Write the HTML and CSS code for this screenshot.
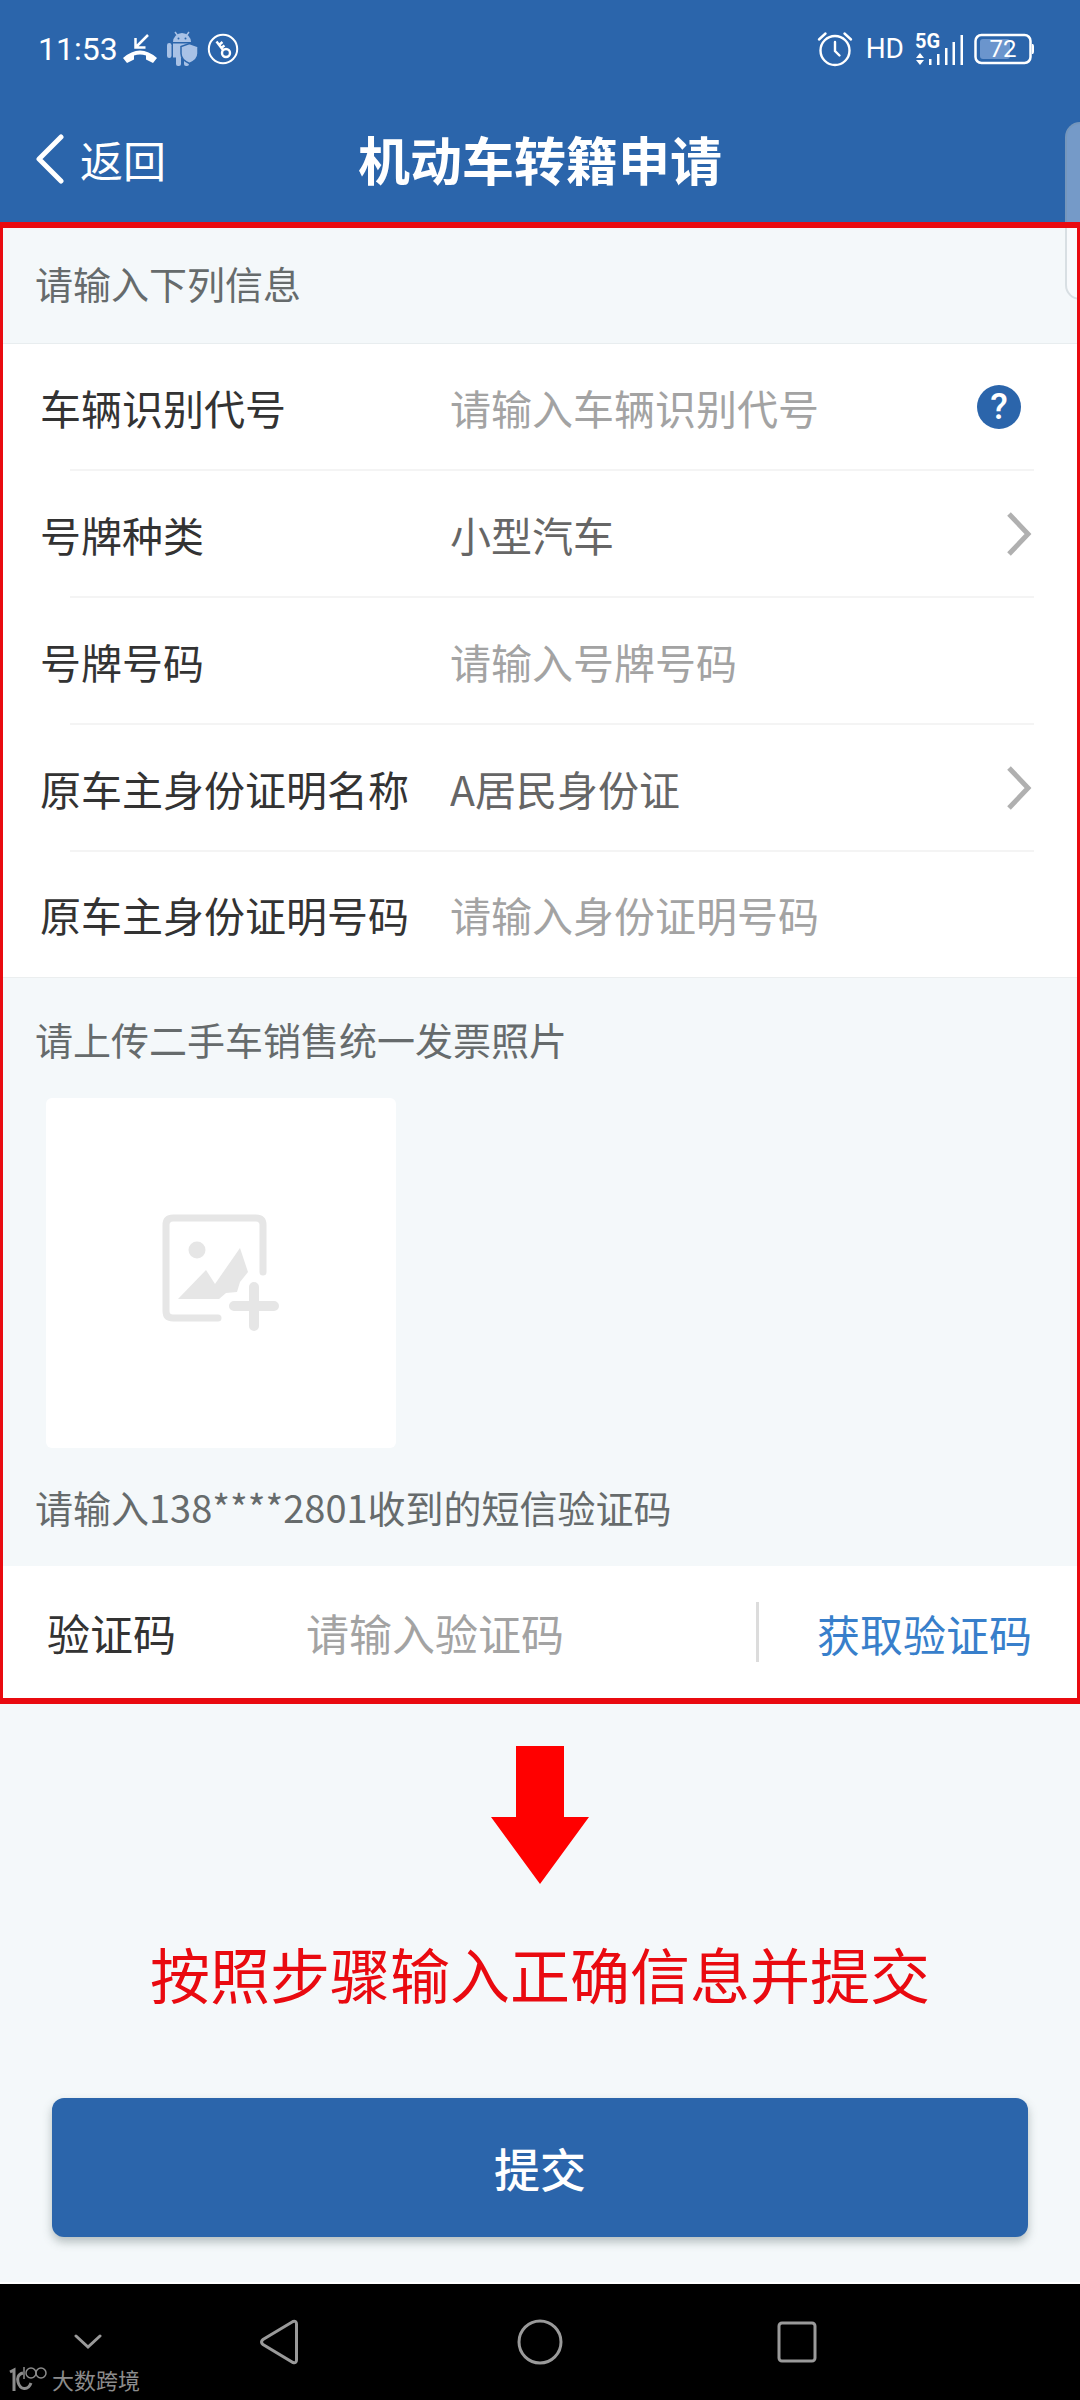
FILE: index.html
```html
<!DOCTYPE html>
<html lang="zh-CN">
<head>
<meta charset="utf-8">
<meta name="viewport" content="width=device-width, initial-scale=1">
<title>机动车转籍申请</title>
<link rel="stylesheet" href="styles.css">
</head>
<body>
<header class="top">
  <div class="status">
    <div class="status-left">
      <span class="clock">11:53</span>
      <svg class="ic-call" width="34" height="30" viewBox="0 0 34 30">
        <path d="M25 1 13 13M12.500 4v9.500h10" fill="none" stroke="#fff" stroke-width="2.500"/>
        <path d="M0 24Q17 9 34 24l-4 5-7-3.500v-4q-6-2-12 0v4L4 29z" fill="#fff"/>
      </svg>
      <svg class="ic-robot" width="32" height="36" viewBox="0 0 32 36" fill="#a9c2e6">
        <path d="M7 11a9 9 0 0 1 18 0z"/>
        <path d="M9 1l3 4M23 1l-3 4" stroke="#a9c2e6" stroke-width="1.500"/>
        <circle cx="12.500" cy="7.500" r="1" fill="#2b65ab"/><circle cx="19.500" cy="7.500" r="1" fill="#2b65ab"/>
        <rect x="1" y="12" width="4.500" height="15" rx="2.200"/>
        <path d="M7 12.500h18v14H7z"/>
        <rect x="10" y="24" width="5" height="11" rx="2"/>
        <rect x="18" y="26" width="5" height="9" rx="2"/>
        <path d="M23.500 12.500l8.500 3v7c0 5-4 8-8.500 10-4.500-2-8.500-5-8.500-10v-7z" stroke="#2b65ab" stroke-width="1.500"/>
      </svg>
      <svg width="32" height="32" viewBox="0 0 32 32" fill="none" stroke="#fff" stroke-width="2">
        <circle cx="16" cy="16" r="14.200"/>
        <circle cx="19" cy="20" r="4" stroke-width="2.400"/>
        <path d="M16 17 9.500 8.500M12 12l3.500-3M14 15l3.500-2.500" stroke-width="2.400"/>
      </svg>
    </div>
    <div class="status-right">
      <svg width="36" height="36" viewBox="0 0 36 36" fill="none" stroke="#fff" stroke-width="2.400" stroke-linecap="round">
        <circle cx="18" cy="19.500" r="14.500"/>
        <path d="M2 8.500 8.500 2.500M34 8.500 27.500 2.500M18 11v9l4.500 4.500"/>
      </svg>
      <span class="hd">HD</span>
      <svg width="50" height="44" viewBox="0 -5 50 44" fill="#fff">
        <text class="net" x="0" y="16">5G</text>
        <path d="M1 26l4-5 4 5zM1 28h8l-4 5z"/>
        <path d="M14 27h2.500v6H14zM22 22h2.500v11H22zM30 16h2.500v17H30zM37.500 10H40v23h-2.500zM45.500 3H48v30h-2.500z"/>
      </svg>
      <svg width="60" height="32" viewBox="0 0 60 32">
        <rect x="1.500" y="2" width="55" height="28" rx="6" fill="none" stroke="#fff" stroke-width="2.500"/>
        <rect x="6" y="6" width="30" height="20" rx="3" fill="#6b95cd"/>
        <path d="M58 11c2 0 2 1 2 5s0 5-2 5z" fill="#fff"/>
        <text class="charge" x="29" y="24" text-anchor="middle">72</text>
      </svg>
    </div>
  </div>
  <div class="bar">
    <a class="back" href="#">
      <svg width="28" height="50" viewBox="0 0 28 50" fill="none" stroke="#fff" stroke-width="5" stroke-linecap="round" stroke-linejoin="round"><path d="M25 3 3 25l22 22"/></svg>
      返回
    </a>
    <h1 class="title">机动车转籍申请</h1>
  </div>
  <div class="side-handle"></div>
</header>

<main class="page">
  <form class="form">
    <p class="hint hint-first">请输入下列信息</p>
    <div class="fields">
      <div class="row">
        <label for="vin">车辆识别代号</label>
        <input id="vin" type="text" placeholder="请输入车辆识别代号">
        <button class="help" type="button" aria-label="帮助">?</button>
      </div>
      <div class="row">
        <label for="plate-type">号牌种类</label>
        <select id="plate-type"><option>小型汽车</option></select>
        <svg class="go" width="26" height="46" viewBox="0 0 26 46" fill="none" stroke="#b0b0b0" stroke-width="5"><path d="M3 3l19 20L3 43"/></svg>
      </div>
      <div class="row">
        <label for="plate-no">号牌号码</label>
        <input id="plate-no" type="text" placeholder="请输入号牌号码">
      </div>
      <div class="row">
        <label for="id-type">原车主身份证明名称</label>
        <select id="id-type"><option>A居民身份证</option></select>
        <svg class="go" width="26" height="46" viewBox="0 0 26 46" fill="none" stroke="#b0b0b0" stroke-width="5"><path d="M3 3l19 20L3 43"/></svg>
      </div>
      <div class="row">
        <label for="id-no">原车主身份证明号码</label>
        <input id="id-no" type="text" placeholder="请输入身份证明号码">
      </div>
    </div>
    <p class="hint">请上传二手车销售统一发票照片</p>
    <button class="upload" type="button" aria-label="上传照片">
      <svg width="118" height="118" viewBox="0 0 118 118" fill="#e6e6e6">
        <path d="M101 58V11q0-7-7-7H11q-7 0-7 7v86q0 7 7 7h45" fill="none" stroke="#e6e6e6" stroke-width="7" stroke-linecap="round"/>
        <circle cx="35" cy="36" r="8.500"/>
        <path d="M16 85 44 56l9 14L78 34l8 24-8 10-3 10-11 1-7 6z"/>
        <path d="M92 73v39M72 92h40" stroke="#e6e6e6" stroke-width="10" stroke-linecap="round"/>
      </svg>
    </button>
    <p class="hint hint-code">请输入138****2801收到的短信验证码</p>
    <div class="code-row">
      <label for="code">验证码</label>
      <input id="code" type="text" placeholder="请输入验证码">
      <button class="get-code" type="button">获取验证码</button>
    </div>
  </form>

  <section class="guide">
    <svg width="98" height="138" viewBox="0 0 98 138" fill="#f00"><path d="M25 0h48v71h25L49 138 0 71h25z"/></svg>
    <p>按照步骤输入正确信息并提交</p>
  </section>
  <button class="submit" type="button">提交</button>
</main>

<nav class="keys">
  <button type="button" aria-label="收起"><svg width="28" height="16" viewBox="0 0 28 16"><path d="M2 2l12 11L26 2"/></svg></button>
  <button type="button" aria-label="后退"><svg width="40" height="46" viewBox="0 0 40 46"><path d="M34 2.500 4 20.500q-3 2.500 0 5L34 43.500q3.500 1 3.500-2.500V5q0-3.500-3.500-2.500z"/></svg></button>
  <button type="button" aria-label="主页"><svg width="46" height="46" viewBox="0 0 46 46"><circle cx="23" cy="23" r="21"/></svg></button>
  <button type="button" aria-label="最近任务"><svg width="40" height="42" viewBox="0 0 40 42"><rect x="2" y="2" width="36" height="38" rx="3"/></svg></button>
  <div class="mark">
    <svg width="38" height="26" viewBox="0 0 38 26" fill="none" stroke="#8c8c8c" stroke-width="1.500">
      <path d="M1 6l4-2v21" stroke-width="3"/>
      <path d="M14 7c-5 1-6 5-5 9 2 8 10 9 13 1" stroke-width="3"/>
      <path d="M15 1v12"/><circle cx="22" cy="7" r="5"/><circle cx="32" cy="7" r="5"/>
    </svg>
    <span>大数跨境</span>
  </div>
</nav>
</body>
</html>
```
FILE: styles.css
```css
* {
  box-sizing: border-box;
}

body {
  margin: 0;
  min-height: 100vh;
  display: flex;
  flex-direction: column;
  background: #f4f8fa;
  color: #333;
  font-family: "Noto Sans CJK SC", sans-serif;
  font-size: 41px;
}

h1,
p {
  margin: 0;
  font-weight: 400;
}

button,
input,
select {
  margin: 0;
  padding: 0;
  border: 0;
  background: none;
  color: inherit;
  font: inherit;
}

svg {
  display: block;
  flex: none;
}

/* Status bar and title bar */
.top {
  position: relative;
  background: #2b65ab;
  color: #fff;
}

.status {
  display: flex;
  justify-content: space-between;
  align-items: center;
  height: 98px;
  padding: 0 46px 0 38px;
}

.status-left,
.status-right {
  display: flex;
  align-items: center;
  gap: 9px;
}

.clock {
  font: 32px/40px Roboto, sans-serif;
}

.ic-call {
  margin-left: -4px;
}

.hd {
  margin: 0 2px 0 4px;
  font: 28px/40px Roboto, sans-serif;
}

.net {
  font: 700 20px Roboto, sans-serif;
}

.charge {
  fill: #fff;
  font: 24px Roboto, sans-serif;
}

.bar {
  display: grid;
  grid-template-columns: 1fr auto 1fr;
  align-items: center;
  height: 124px;
  padding: 0 36px 2px;
}

.back {
  display: flex;
  align-items: center;
  gap: 16px;
  color: #fff;
  font-size: 43px;
  line-height: 60px;
  text-decoration: none;
}

.title {
  font-size: 52px;
  font-weight: 700;
  line-height: 76px;
}

.side-handle {
  position: absolute;
  z-index: 1;
  top: 122px;
  right: 0;
  width: 15px;
  height: 178px;
  border: 2px solid rgba(120, 140, 150, 0.25);
  border-right: 0;
  border-radius: 26px 0 0 26px;
  background: rgba(255, 255, 255, 0.35);
}

/* Form */
.page {
  flex: 1;
  display: flex;
  flex-direction: column;
}

.form {
  position: relative;
  z-index: 2;
  border: solid #e90a10;
  border-width: 6px 3px;
}

.hint {
  padding: 33px 32px 31px;
  color: #666b6c;
  font-size: 38px;
  line-height: 56px;
}

.hint-first {
  padding: 27px 32px 32px;
  border-bottom: 1px solid #e8edef;
}

.hint-code {
  padding: 31px 32px;
}

.fields {
  background: #fff;
  border-bottom: 1px solid #ebeeef;
}

.row {
  position: relative;
  display: grid;
  grid-template-columns: 410px 1fr auto;
  align-items: center;
  height: 127px;
  padding: 0 45px 2px 37px;
}

.row:last-child {
  height: 125px;
}

.row:not(:last-child)::after {
  content: "";
  position: absolute;
  right: 43px;
  bottom: 0;
  left: 67px;
  border-bottom: 2px solid #f4f4f4;
}

input,
select {
  width: 100%;
  min-width: 0;
  height: 64px;
  outline: 0;
}

select {
  appearance: none;
  color: #666;
}

input::placeholder {
  color: #a3a3a3;
  opacity: 1;
}

.help {
  width: 44px;
  height: 44px;
  margin-right: 11px;
  border-radius: 50%;
  background: #2b65ab;
  color: #fff;
  font: 500 36px/44px Roboto, sans-serif;
}

.upload {
  display: flex;
  align-items: center;
  justify-content: center;
  width: 350px;
  height: 350px;
  margin-left: 43px;
  border-radius: 6px;
  background: #fff;
}

.code-row {
  display: grid;
  grid-template-columns: 259px 1fr auto;
  align-items: center;
  height: 132px;
  padding: 0 45px 0 44px;
  background: #fff;
  font-size: 43px;
}

.get-code {
  height: 60px;
  padding-left: 58px;
  border-left: 3px solid #dcdcdc;
  color: #387fcb;
}

/* Guide and submit */
.guide {
  display: flex;
  flex-direction: column;
  align-items: center;
  gap: 45px;
  padding: 42px 20px 81px;
  color: #e90a10;
  font-size: 60px;
  line-height: 88px;
}

.submit {
  height: 139px;
  margin: 0 52px 45px;
  padding-bottom: 2px;
  border-radius: 12px;
  background: #2b65ab;
  box-shadow: 0 5px 10px rgba(60, 80, 80, 0.35);
  color: #fff;
  font-size: 46px;
  font-weight: 500;
}

/* System keys */
.keys {
  position: relative;
  display: grid;
  grid-template-columns: 176fr 206fr 316fr 198fr 184fr;
  height: 118px;
  border-top: 2px solid #fff;
  background: #000;
}

.keys button {
  display: flex;
  align-items: center;
  justify-content: center;
}

.keys button svg {
  fill: none;
  stroke: #9a9a9a;
  stroke-width: 3;
  stroke-linecap: round;
}

.mark {
  position: absolute;
  bottom: 5px;
  left: 9px;
  display: flex;
  align-items: center;
  gap: 5px;
  color: #8c8c8c;
  font-size: 22px;
  line-height: 32px;
}
```
